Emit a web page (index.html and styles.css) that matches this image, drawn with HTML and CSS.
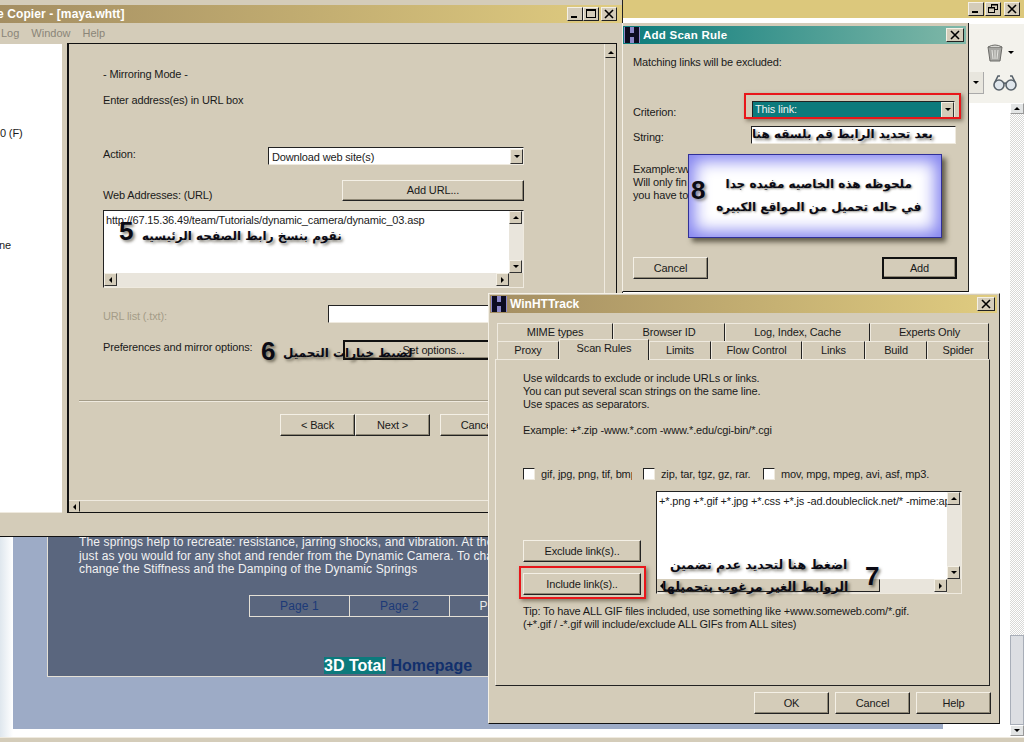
FILE: index.html
```html
<!DOCTYPE html>
<html lang="en">
<head>
  <meta charset="UTF-8">
  <title>WinHTTrack</title>
  <link rel="stylesheet" href="styles.css">
</head>
<body>

<div class="screen">

  <!-- browser behind everything -->
  <div class="browser">
    <div class="browser-title">
      <span class="win-btn"><svg width="14" height="12"><rect x="3" y="8" width="6" height="2" fill="#000"/></svg></span>
      <span class="win-btn"><svg width="14" height="12" fill="none" stroke="#000"><rect x="5.5" y="1.5" width="6" height="5"/><rect x="2.5" y="4.5" width="6" height="5" fill="#d4ccb9"/><path d="M5 2h7M2 5h7"/></svg></span>
      <span class="win-btn win-btn-close"><svg width="14" height="12" stroke="#000" stroke-width="1.6"><path d="M3 2l8 8M11 2l-8 8"/></svg></span>
    </div>
    <div class="browser-toolbar">
      <div class="tool-row">
        <svg class="trash" width="16" height="18" viewBox="0 0 16 18">
          <path d="M1 3h14l-2 14H3z" fill="#a8a8a4" stroke="#6c6c68"/>
          <path d="M1 3q7-4 14 0" fill="#d8d8d4" stroke="#6c6c68"/>
          <path d="M5 6l1 9M8 6v9M11 6l-1 9" stroke="#e4e4e0"/>
        </svg>
        <span class="mini-arrow"></span>
      </div>
      <div class="tool-row tool-row-two">
        <span class="combo-end"><span class="mini-arrow"></span></span>
        <svg class="glasses" width="24" height="18" viewBox="0 0 24 18" fill="#dfe6ec" stroke="#57616a" stroke-width="1.6">
          <circle cx="6" cy="11" r="5"/>
          <circle cx="18" cy="11" r="5"/>
          <path d="M11 10q1-2 2 0M2 8l3-6h2M22 8l-3-6h-2" fill="none"/>
        </svg>
      </div>
    </div>
    <div class="browser-body">
      <div class="page-wrap">
        <div class="page">
          <div class="page-panel">
            <p class="page-line">The springs help to recreate: resistance, jarring shocks, and vibration. At the</p>
            <p class="page-line">just as you would for any shot and render from the Dynamic Camera. To change</p>
            <p class="page-line">change the Stiffness and the Damping of the Dynamic Springs</p>
            <div class="page-nav">
              <span class="page-cell">Page 1</span>
              <span class="page-cell">Page 2</span>
              <span class="page-cell page-cell-on">Page 3</span>
            </div>
            <div class="page-home"><span class="selected">3D Total</span> <span class="home-link">Homepage</span></div>
          </div>
        </div>
      </div>
      <div class="page-scroll">
        <span class="sb-btn"><span class="arrow-up"></span></span>
        <span class="page-scroll-track"></span>
        <span class="page-scroll-thumb"></span>
        <span class="sb-btn"><span class="arrow-down"></span></span>
      </div>
    </div>
    <div class="browser-status"></div>
  </div>

  <!-- main copier window -->
  <div class="window main-win">
    <div class="title-bar gold">
      <span class="title-text main-title">e Copier - [maya.whtt]</span>
      <span class="win-btns">
        <span class="win-btn"><svg width="14" height="12"><rect x="3" y="8" width="6" height="2" fill="#000"/></svg></span>
        <span class="win-btn"><svg width="14" height="12" fill="none" stroke="#000"><rect x="2.5" y="1.5" width="9" height="8"/><path d="M2 2.500h10"/></svg></span>
        <span class="win-btn win-btn-close"><svg width="14" height="12" stroke="#000" stroke-width="1.6"><path d="M3 2l8 8M11 2l-8 8"/></svg></span>
      </span>
    </div>
    <div class="menu-bar">
      <span>Log</span><span>Window</span><span>Help</span>
    </div>
    <div class="main-body">
      <div class="tree">
        <span class="tree-a">0 (F)</span>
        <span class="tree-b">ne</span>
      </div>
      <div class="wizard">
        <div class="wizard-top">
          <div class="wizard-form">
            <p class="mode-line">- Mirroring Mode -</p>
            <p class="enter-line">Enter address(es) in URL box</p>

            <div class="row action-row">
              <span class="row-label">Action:</span>
              <div class="select">
                <span class="select-value">Download web site(s)</span>
                <span class="select-btn"><span class="arrow-down"></span></span>
              </div>
            </div>

            <div class="row url-row">
              <span class="row-label">Web Addresses: (URL)</span>
              <button class="btn add-url">Add URL...</button>
            </div>

            <div class="url-box">
              <div class="url-box-main">
                <div class="url-text">http://67.15.36.49/team/Tutorials/dynamic_camera/dynamic_03.asp</div>
                <div class="hscroll">
                  <span class="sb-btn"><span class="arrow-left"></span></span>
                  <span class="sb-btn"><span class="arrow-right"></span></span>
                </div>
              </div>
              <div class="vscroll">
                <span class="sb-btn"><span class="arrow-up"></span></span>
                <span class="sb-btn"><span class="arrow-down"></span></span>
              </div>
            </div>

            <div class="row list-row">
              <span class="row-label disabled">URL list (.txt):</span>
              <span class="text-input"></span>
            </div>

            <div class="row pref-row">
              <span class="row-label">Preferences and mirror options:</span>
              <button class="btn btn-default set-options">Set options...</button>
            </div>
          </div>

          <div class="separator"></div>

          <div class="wizard-nav">
            <button class="btn">&lt; Back</button>
            <button class="btn">Next &gt;</button>
            <button class="btn nav-cancel">Cancel</button>
          </div>
        </div>
        <div class="wizard-bottom">
          <span class="sb-btn sb-flat"><span class="arrow-left"></span></span>
        </div>
        <div class="wizard-side">
          <span class="sb-btn"><span class="arrow-up"></span></span>
        </div>
      </div>
    </div>
    <div class="status-bar"></div>
  </div>

  <!-- add scan rule dialog -->
  <div class="window rule-win">
    <div class="title-bar teal">
      <svg class="h-logo" width="16" height="16"><rect width="16" height="16" fill="#8c88c8"/><path d="M1 0h5v16H1zM10 0h5v16h-5zM6 6h4v4H6z" fill="#0c0c20"/></svg>
      <span class="title-text">Add Scan Rule</span>
      <span class="win-btn win-btn-close push-right"><svg width="14" height="12" stroke="#000" stroke-width="1.6"><path d="M3 2l8 8M11 2l-8 8"/></svg></span>
    </div>
    <div class="rule-body">
      <p class="rule-note">Matching links will be excluded:</p>
      <div class="row criterion-row">
        <span class="row-label">Criterion:</span>
        <div class="select select-teal">
          <span class="select-value">This link:</span>
          <span class="select-btn"><span class="arrow-down"></span></span>
        </div>
      </div>
      <div class="row string-row">
        <span class="row-label">String:</span>
        <span class="text-input string-input"></span>
      </div>
      <div class="rule-example">
        <p>Example:ww</p>
        <p>Will only fin</p>
        <p>you have to</p>
      </div>
      <div class="rule-btns">
        <button class="btn rule-btn">Cancel</button>
        <button class="btn btn-default rule-btn">Add</button>
      </div>
    </div>
  </div>

  <!-- options dialog -->
  <div class="window track-win">
    <div class="title-bar gold">
      <svg class="h-logo" width="16" height="16"><rect width="16" height="16" fill="#8c88c8"/><path d="M1 0h5v16H1zM10 0h5v16h-5zM6 6h4v4H6z" fill="#0c0c20"/></svg>
      <span class="title-text">WinHTTrack</span>
      <span class="win-btn win-btn-close push-right"><svg width="14" height="12" stroke="#000" stroke-width="1.6"><path d="M3 2l8 8M11 2l-8 8"/></svg></span>
    </div>

    <div class="tabs tabs-back">
      <span class="tab tab-w116">MIME types</span>
      <span class="tab tab-w112">Browser ID</span>
      <span class="tab tab-w145">Log, Index, Cache</span>
      <span class="tab tab-w119">Experts Only</span>
    </div>
    <div class="tabs tabs-front">
      <span class="tab tab-w62">Proxy</span>
      <span class="tab tab-active">Scan Rules</span>
      <span class="tab tab-w62">Limits</span>
      <span class="tab tab-w91">Flow Control</span>
      <span class="tab tab-w63">Links</span>
      <span class="tab tab-w62">Build</span>
      <span class="tab tab-w62">Spider</span>
    </div>

    <div class="tab-panel">
      <p>Use wildcards to exclude or include URLs or links.</p>
      <p>You can put several scan strings on the same line.</p>
      <p>Use spaces as separators.</p>
      <p class="example-line">Example: +*.zip -www.*.com -www.*.edu/cgi-bin/*.cgi</p>

      <div class="checks">
        <span class="check check-a"><span class="checkbox"></span><span class="check-label clip">gif, jpg, png, tif, bmp</span></span>
        <span class="check check-b"><span class="checkbox"></span><span class="check-label">zip, tar, tgz, gz, rar.</span></span>
        <span class="check"><span class="checkbox"></span><span class="check-label">mov, mpg, mpeg, avi, asf, mp3.</span></span>
      </div>

      <div class="rule-area">
        <div class="rule-actions">
          <button class="btn act-btn">Exclude link(s)..</button>
          <button class="btn act-btn">Include link(s)..<span class="red-box red-include"></span></button>
        </div>
        <div class="rule-box">
          <div class="rule-box-main">
            <div class="rule-text">+*.png +*.gif +*.jpg +*.css +*.js -ad.doubleclick.net/* -mime:application/*</div>
            <div class="hscroll">
              <span class="sb-btn sb-flat"><span class="arrow-left"></span></span>
              <span class="sb-btn"><span class="arrow-right"></span></span>
            </div>
          </div>
          <div class="vscroll">
            <span class="sb-btn"><span class="arrow-up"></span></span>
            <span class="sb-btn"><span class="arrow-down"></span></span>
          </div>
        </div>
      </div>

      <p class="tip-line">Tip: To have ALL GIF files included, use something like +www.someweb.com/*.gif.</p>
      <p>(+*.gif / -*.gif will include/exclude ALL GIFs from ALL sites)</p>
    </div>

    <div class="dialog-btns">
      <button class="btn dialog-btn">OK</button>
      <button class="btn dialog-btn">Cancel</button>
      <button class="btn dialog-btn">Help</button>
    </div>
  </div>

  <!-- arabic notes drawn over the windows -->
  <span class="note-num num-5">5</span>
  <span class="note note-5" dir="rtl">نقوم بنسخ رابط الصفحه الرئيسيه</span>
  <span class="note-num num-6">6</span>
  <span class="note note-6" dir="rtl">لضبط خيارات التحميل</span>
  <span class="note-num num-7">7</span>
  <span class="note note-7a" dir="rtl">اضغط هنا لتحديد عدم تضمين</span>
  <span class="note note-7b" dir="rtl">الروابط الغير مرغوب بتحميلها</span>
  <span class="note note-string" dir="rtl">بعد تحديد الرابط قم بلسقه هنا</span>
  <span class="red-box red-criterion"></span>

  <div class="callout">
    <span class="callout-num">8</span>
    <div class="callout-text" dir="rtl">
      <p>ملحوظه هذه الخاصيه مفيده جدا</p>
      <p>في حاله تحميل من المواقع الكبيره</p>
    </div>
  </div>

</div>

</body>
</html>
```

FILE: styles.css
```css
* {
  box-sizing: border-box;
}
html, body {
  margin: 0;
  padding: 0;
  background: #fff;
}
p {
  margin: 0;
}
.screen {
  position: relative;
  width: 1024px;
  height: 742px;
  overflow: hidden;
  font-family: "Liberation Sans", Arial, sans-serif;
  font-size: 11px;
  line-height: 13px;
  letter-spacing: -0.15px;
  color: #1a1a1a;
}

/* ---------- shared win32 bits ---------- */
.window {
  position: absolute;
  background: #d4ccb9;
  display: flex;
  flex-direction: column;
}
.title-bar {
  height: 18px;
  display: flex;
  align-items: center;
  flex: none;
}
.gold {
  background: linear-gradient(90deg, #a48e62, #e0cc80);
}
.teal {
  background: linear-gradient(90deg, #0c7c7c, #80b8a8);
}
.title-text {
  color: #fff;
  font-weight: bold;
  font-size: 12px;
  letter-spacing: 0;
  white-space: nowrap;
}
.h-logo {
  flex: none;
  margin: 0 3px 0 1px;
}
.win-btns {
  display: flex;
  margin-left: auto;
  margin-right: 5px;
}
.win-btn {
  width: 16px;
  height: 14px;
  display: inline-flex;
  align-items: center;
  justify-content: center;
  background: #d4ccb9;
  border: 1px solid;
  border-color: #f4f0e6 #222 #222 #f4f0e6;
  flex: none;
}
.win-btn-close {
  margin-left: 2px;
}
.push-right {
  margin-left: auto;
  margin-right: 2px;
  width: 18px;
}
.btn {
  display: block;
  font: inherit;
  letter-spacing: inherit;
  color: #1a1a1a;
  background: #d4ccb9;
  padding: 0;
  border: 1px solid;
  border-color: #f4f0e6 #222 #222 #f4f0e6;
  box-shadow: inset -1px -1px 0 #8f8876;
}
.btn-default {
  border: 2px solid #111;
}
.row {
  display: flex;
  align-items: flex-start;
}
.row-label {
  flex: none;
  white-space: nowrap;
}
.disabled {
  color: #a49c88;
}
.text-input {
  display: block;
  background: #fff;
  border-top: 1px solid #222;
  border-left: 1px solid #222;
  border-right: 1px solid #efeadf;
  border-bottom: 1px solid #efeadf;
}
.select {
  display: flex;
  align-items: stretch;
  background: #fff;
  border-top: 1px solid #222;
  border-left: 1px solid #222;
  border-right: 1px solid #efeadf;
  border-bottom: 1px solid #efeadf;
}
.select-value {
  flex: 1;
  padding: 3px 3px;
}
.select-btn, .sb-btn {
  display: flex;
  align-items: center;
  justify-content: center;
  flex: none;
  width: 13px;
  height: 13px;
  background: #d4ccb9;
  border: 1px solid;
  border-color: #f4f0e6 #333 #333 #f4f0e6;
}
.arrow-up, .arrow-down, .arrow-left, .arrow-right {
  width: 0;
  height: 0;
  border: 3px solid transparent;
}
.arrow-up {
  border-bottom-color: #000;
  border-top-width: 0;
}
.arrow-down {
  border-top-color: #000;
  border-bottom-width: 0;
}
.arrow-left {
  border-right-color: #000;
  border-left-width: 0;
}
.arrow-right {
  border-left-color: #000;
  border-right-width: 0;
}
.hscroll {
  display: flex;
  justify-content: space-between;
  height: 14px;
  background: #e9e5dc;
  flex: none;
}
.vscroll {
  width: 14px;
  display: flex;
  flex-direction: column;
  justify-content: space-between;
  background: #e9e5dc;
  border-bottom: 14px solid #d4ccb9;
  flex: none;
}
.red-box {
  position: absolute;
  border: 2px solid #e8161a;
  box-shadow: 2px 2px 4px rgba(60, 50, 30, 0.55);
}

/* ---------- browser behind ---------- */
.browser {
  position: absolute;
  inset: 0;
  display: flex;
  flex-direction: column;
}
.browser-title {
  height: 18px;
  flex: none;
  display: flex;
  justify-content: flex-end;
  align-items: center;
  padding-right: 4px;
  gap: 1px;
  background: #dcc87c;
}
.browser-title .win-btn {
  width: 16px;
}
.browser-toolbar {
  height: 82px;
  flex: none;
  margin-top: 6px;
  margin-bottom: -6px;
  background: #f3f2ec;
  border-bottom: 1px solid #c8c8c4;
}
.tool-row {
  height: 47px;
  display: flex;
  justify-content: flex-end;
  align-items: center;
  padding: 10px 10px 0 0;
  gap: 5px;
}
.mini-arrow {
  width: 0;
  height: 0;
  border: 3px solid transparent;
  border-top-color: #000;
  border-bottom-width: 0;
}
.tool-row-two {
  height: 24px;
  padding: 0 7px 0 0;
  gap: 9px;
}
.combo-end {
  width: 16px;
  height: 22px;
  display: flex;
  align-items: center;
  justify-content: center;
  background: #e8e6de;
  border-right: 1px solid #aaa;
  border-bottom: 1px solid #aaa;
}
.browser-body {
  flex: 1;
  display: flex;
  min-height: 0;
  padding-top: 3px;
}
.page-wrap {
  flex: 1;
  padding-right: 67px;
  padding-bottom: 8px;
  display: flex;
  align-items: flex-end;
  background: linear-gradient(90deg, #dfe7ee, #fff 13px);
}
.page {
  flex: 1;
  height: 433px;
  margin-left: 13px;
  padding: 0 13px 52px 34px;
  background: #9dabc6;
  display: flex;
  align-items: flex-end;
}
.page-panel {
  flex: 1;
  height: 300px;
  padding: 158px 0 0 31px;
  background: #5a667e;
  border-left: 1px solid #e4e0d6;
  border-bottom: 1px solid #e4e0d6;
  color: #f2f2f2;
  font-size: 12px;
  line-height: 14px;
  letter-spacing: 0.13px;
}
.page-line {
  white-space: nowrap;
  height: 13.700px;
}
.page-nav {
  display: flex;
  margin: 19px 0 0 170px;
  height: 22px;
  color: #1c3a78;
}
.page-cell {
  width: 100px;
  border-left: 1px solid #e4e0d6;
  border-top: 1px solid #e4e0d6;
  border-bottom: 1px solid #e4e0d6;
  text-align: center;
  line-height: 21px;
}
.page-cell-on {
  color: #e8e8e8;
  border-right: 1px solid #e4e0d6;
}
.page-home {
  margin: 40px 0 0 245px;
  font-size: 16px;
  font-weight: bold;
  line-height: 18px;
  letter-spacing: 0;
  white-space: nowrap;
}
.selected {
  background: #0c7a7c;
  color: #fff;
}
.home-link {
  color: #12306c;
}
.page-scroll {
  width: 14px;
  display: flex;
  flex-direction: column;
  flex: none;
  padding-bottom: 1px;
}
.page-scroll .sb-btn {
  width: 14px;
  height: 11px;
  background: #e2e4e4;
  border-color: #fff #999 #999 #fff;
}
.page-scroll-track {
  flex: 1;
  background: repeating-conic-gradient(#d8d8d6 0 25%, #fff 0 50%) 0 0 / 2px 2px;
}
.page-scroll-thumb {
  height: 90px;
  background: #dcdee2;
  border: 1px solid #a8aeb8;
}
.browser-status {
  height: 5px;
  flex: none;
  background: #d4ccb9;
  border-top: 1px solid #efeadf;
}

/* ---------- main window ---------- */
.main-win {
  left: 0;
  top: 0;
  width: 623px;
  height: 537px;
  padding-top: 5px;
  border-right: 1px solid #222;
  border-bottom: 1px solid #111;
}
.main-title {
  margin-left: -3px;
  letter-spacing: 0.1px;
}
.menu-bar {
  height: 20px;
  flex: none;
  display: flex;
  align-items: center;
  gap: 12px;
  padding-left: 1px;
  color: #8a8578;
  letter-spacing: 0;
}
.main-body {
  flex: 1;
  display: flex;
  min-height: 0;
  padding-right: 5px;
}
.tree {
  width: 62px;
  flex: none;
  background: #fff;
  margin-top: 1px;
  border-bottom: 1px solid #efeadf;
  padding-top: 83px;
}
.tree-a {
  display: block;
  white-space: nowrap;
}
.tree-b {
  display: block;
  margin: 99px 0 0 -1px;
  white-space: nowrap;
}
.wizard {
  margin-left: 5px;
  flex: 1;
  min-width: 0;
  border: 1px solid #111;
  border-width: 1px 1px 1px 2px;
  display: grid;
  grid-template-columns: 1fr 12px;
  grid-template-rows: 1fr 12px;
}
.wizard-top {
  padding-left: 34px;
  min-width: 0;
  overflow: hidden;
}
.wizard-form {
  width: 421px;
}
.mode-line {
  margin-top: 24px;
}
.enter-line {
  margin-top: 13px;
}
.action-row {
  margin-top: 40px;
}
.action-row .row-label {
  width: 165px;
  padding-top: 1px;
}
.action-row .select {
  width: 256px;
  height: 18px;
}
.action-row .select-btn {
  height: 15px;
  margin-top: 1px;
}
.url-row {
  margin-top: 15px;
  justify-content: space-between;
  align-items: flex-end;
}
.url-row .row-label {
  margin-bottom: -1px;
}
.add-url {
  width: 182px;
  height: 21px;
}
.url-box {
  margin-top: 9px;
  height: 78px;
  display: flex;
  background: #fff;
  border: 1px solid;
  border-color: #222 #efeadf #efeadf #222;
}
.url-box-main {
  flex: 1;
  min-width: 0;
  display: flex;
  flex-direction: column;
}
.url-text {
  flex: 1;
  padding: 3px 2px;
  white-space: nowrap;
}
.list-row {
  margin-top: 17px;
  width: 421px;
}
.list-row .row-label {
  width: 225px;
  padding-top: 5px;
}
.list-row .text-input {
  flex: 1;
  height: 18px;
}
.pref-row {
  margin-top: 17px;
}
.pref-row .row-label {
  width: 240px;
  padding-top: 1px;
}
.set-options {
  width: 181px;
  height: 20px;
}
.separator {
  margin: 40px 0 0 -24px;
  height: 2px;
  border-top: 1px solid #a49c88;
  border-bottom: 1px solid #efeadf;
}
.wizard-nav {
  display: flex;
  margin: 12px 0 0 177px;
}
.wizard-nav .btn {
  width: 75px;
  height: 22px;
}
.nav-cancel {
  margin-left: 10px;
}
.wizard-bottom {
  grid-column: 1 / 3;
  grid-row: 2;
  border-top: 1px solid #efeadf;
}
.wizard-bottom .sb-btn {
  width: 11px;
  height: 11px;
  border-color: transparent #222 transparent transparent;
}
.wizard-side {
  grid-column: 2;
  grid-row: 1;
  padding-top: 2px;
  border-left: 1px solid #efeadf;
}
.wizard-side .sb-btn {
  width: 11px;
  height: 12px;
  border-color: transparent transparent #222 transparent;
}
.status-bar {
  height: 23px;
  flex: none;
}

/* ---------- add scan rule ---------- */
.rule-win {
  left: 622px;
  top: 23px;
  width: 347px;
  height: 269px;
  padding-top: 3px;
  border-right: 1px solid #222;
  border-left: 1px solid #f4f0e6;
  border-bottom: 1px solid #111;
}
.rule-win .title-bar {
  margin: 0 2px 0 0;
}
.rule-win .title-text {
  letter-spacing: 0.25px;
  font-size: 11.500px;
}
.rule-body {
  padding: 12px 11px 0 10px;
}
.rule-note {
  height: 14px;
}
.criterion-row {
  margin-top: 30px;
  align-items: center;
}
.criterion-row .row-label {
  width: 119px;
  margin-top: 6px;
}
.select-teal {
  width: 203px;
  height: 18px;
  background: #0c7a7c;
  color: #f0f0f0;
}
.select-teal .select-value {
  padding: 1px 2px;
}
.select-teal .select-btn {
  width: 13px;
  height: 16px;
}
.string-row {
  margin-top: 6px;
  align-items: center;
}
.string-row .row-label {
  width: 118px;
  margin-top: 6px;
}
.string-input {
  width: 205px;
  height: 18px;
}
.rule-example {
  margin-top: 19px;
  white-space: nowrap;
}
.rule-btns {
  margin-top: 55px;
  display: flex;
  justify-content: space-between;
  width: 324px;
}
.rule-btn {
  width: 75px;
  height: 22px;
}

/* ---------- winhttrack options ---------- */
.track-win {
  left: 488px;
  top: 293px;
  width: 512px;
  height: 431px;
  padding-top: 1px;
  border-right: 1px solid #222;
  border-bottom: 1px solid #111;
  border-left: 1px solid #f4f0e6;
  border-top: 1px solid #f4f0e6;
}
.track-win .title-bar {
  margin: 0 2px 0 1px;
}
.tabs {
  display: flex;
  flex: none;
  height: 18px;
  padding-left: 8px;
  align-items: flex-end;
}
.tabs-back {
  margin-top: 10px;
}
.tab {
  height: 18px;
  display: block;
  text-align: center;
  line-height: 16px;
  border-top: 1px solid #efeadf;
  border-left: 1px solid #efeadf;
  border-right: 1px solid #222;
  white-space: nowrap;
}
.tab-w116 { width: 116px; }
.tab-w112 { width: 112px; }
.tab-w145 { width: 145px; }
.tab-w119 { width: 119px; }
.tab-w62 { width: 62px; }
.tab-w63 { width: 63px; }
.tab-w91 { width: 91px; }
.tab-active {
  width: 90px;
  height: 21px;
  line-height: 16px;
  position: relative;
  margin-bottom: -1px;
  background: #d4ccb9;
  z-index: 1;
}
.tab-panel {
  margin: 0 9px 0 6px;
  height: 327px;
  flex: none;
  padding: 12px 0 0 27px;
  border: 1px solid;
  border-color: #efeadf #222 #222 #efeadf;
}
.example-line {
  margin-top: 13px;
}
.checks {
  display: flex;
  margin-top: 31px;
  height: 12px;
  align-items: center;
}
.check {
  display: flex;
  align-items: center;
  white-space: nowrap;
}
.check-a {
  width: 120px;
}
.check-b {
  width: 120px;
}
.checkbox {
  width: 12px;
  height: 12px;
  flex: none;
  background: #fff;
  border: 1px solid;
  border-color: #222 #efeadf #efeadf #222;
  margin-right: 6px;
}
.check-label.clip {
  width: 91px;
  overflow: hidden;
}
.rule-area {
  display: flex;
  margin-top: 11px;
  height: 103px;
}
.rule-actions {
  width: 133px;
  flex: none;
  padding-top: 49px;
}
.act-btn {
  width: 118px;
  height: 22px;
  position: relative;
  margin-bottom: 11px;
}
.red-include {
  inset: -8px -6px -5px -5px;
}
.rule-box {
  width: 306px;
  display: flex;
  background: #fff;
  border: 1px solid;
  border-color: #222 #efeadf #efeadf #222;
}
.rule-box-main {
  flex: 1;
  min-width: 0;
  display: flex;
  flex-direction: column;
}
.rule-text {
  flex: 1;
  overflow: hidden;
  padding: 3px 2px;
  white-space: nowrap;
}
.rule-box .sb-flat {
  width: 223px;
  border-color: transparent #222 #222 transparent;
  justify-content: flex-start;
  padding-left: 2px;
}
.tip-line {
  margin-top: 11px;
}
.dialog-btns {
  display: flex;
  justify-content: flex-end;
  gap: 6px;
  padding: 6px 8px 0 0;
}
.dialog-btn {
  width: 75px;
  height: 22px;
}

/* ---------- arabic notes on top ---------- */
.note, .note-num {
  position: absolute;
  white-space: nowrap;
  color: #0a0a14;
  letter-spacing: 0;
  text-shadow: 2px 2px 3px rgba(50, 45, 30, 0.6);
}
.note {
  font-family: "DejaVu Sans", sans-serif;
  font-weight: bold;
  font-size: 12px;
  line-height: 16px;
}
.note-num {
  font-family: "Liberation Sans", Arial, sans-serif;
  font-weight: bold;
  font-size: 26px;
  line-height: 26px;
}
.num-5 { left: 119px; top: 218px; }
.note-5 { left: 142px; top: 228px; }
.num-6 { left: 261px; top: 338px; }
.note-6 { left: 283px; top: 345px; }
.num-7 { left: 865px; top: 563px; }
.note-7a { left: 670px; top: 557px; font-size: 12.500px; }
.note-7b { left: 662px; top: 579px; font-size: 12.700px; }
.note-string { left: 752px; top: 126px; }
.red-criterion {
  left: 744px;
  top: 93px;
  width: 217px;
  height: 26px;
}
.callout {
  position: absolute;
  left: 688px;
  top: 154px;
  width: 254px;
  height: 84px;
  display: flex;
  align-items: center;
  letter-spacing: 0;
  background: #fff;
  border: 1px solid #303098;
  box-shadow: inset 0 0 16px 6px #8484f0, 4px 4px 5px rgba(50, 45, 30, 0.7);
}
.callout-num {
  font-weight: bold;
  font-size: 26px;
  line-height: 26px;
  margin: -12px 0 0 2px;
  color: #0a0a14;
  text-shadow: 2px 2px 3px rgba(50, 45, 30, 0.5);
}
.callout-text {
  flex: 1;
  padding-right: 9px;
  text-align: center;
  font-family: "DejaVu Sans", sans-serif;
  font-weight: bold;
  font-size: 12px;
  line-height: 23px;
  color: #0a0a14;
  text-shadow: 1px 1px 2px rgba(50, 45, 30, 0.5);
}
```
